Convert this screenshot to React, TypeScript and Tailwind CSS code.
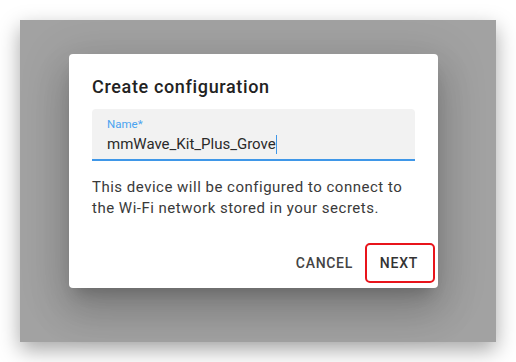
export default function App() {
  return (
    <div className="h-[362px] w-[516px] bg-white p-5 font-['Roboto',sans-serif]">
      <div className="h-[322px] w-[476px] bg-[#a2a2a2] pl-[49px] pt-[34px] shadow-[0_8px_20px_rgba(0,0,0,0.35)]">
        <div className="flex h-[234px] w-[369px] flex-col rounded-[4px] bg-white shadow-[0_11px_15px_-7px_rgba(0,0,0,0.2),0_24px_38px_3px_rgba(0,0,0,0.14),0_9px_46px_8px_rgba(0,0,0,0.12)]">
          <h2 className="px-[23px] pt-[21px] text-[18px] leading-[24px] font-medium tracking-[0.65px] text-[#222]">
            Create configuration
          </h2>

          <div className="mx-[23px] mt-[10px] flex h-[52px] flex-col rounded-t-[4px] border-b-2 border-[#3f97e8] bg-[#f2f2f2] px-[15px] pt-[9px]">
            <span className="text-[11.5px] leading-[13px] text-[#4aa3f0]">Name*</span>
            <div className="mt-[3px] flex items-center text-[15px] leading-[20px] text-[#2a2a2a]">
              <span>mmWave_Kit_Plus_Grove</span>
              <span className="h-[19px] w-px bg-[#3f97e8]" />
            </div>
          </div>

          <p className="mt-[16px] px-[23px] text-[15px] leading-[21px] tracking-[0.5px] text-[#3a3a3a]">
            This device will be configured to connect to the Wi‑Fi network stored in your secrets.
          </p>

          <div className="mt-auto flex items-center justify-end gap-[12px] pr-[3px] pb-[5px]">
            <button className="text-[14px] font-medium tracking-[0.7px] text-[#444]">CANCEL</button>
            <div className="flex h-[40px] w-[70px] items-center justify-center rounded-[5px] border-2 border-[#e8141b] pr-[2px]">
              <button className="text-[14px] font-medium tracking-[0.8px] text-[#333]">NEXT</button>
            </div>
          </div>
        </div>
      </div>
    </div>
  );
}
